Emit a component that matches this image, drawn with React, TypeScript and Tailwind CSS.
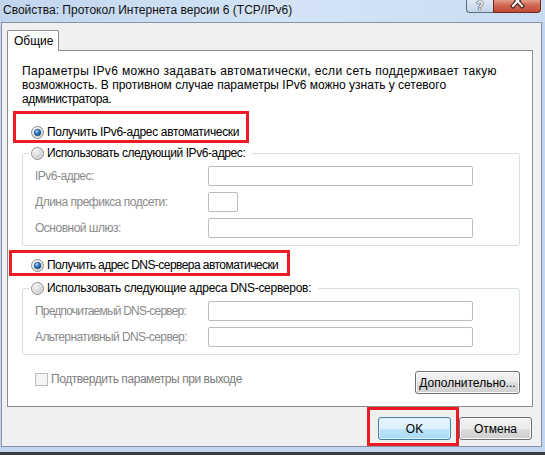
import React from 'react';

const FONT = "font-['Liberation_Sans','Noto_Sans',sans-serif]";

// Win7-style radio button
const Radio: React.FC<{ checked?: boolean }> = ({ checked = false }) => (
  <svg width="13" height="13" viewBox="0 0 13 13" className="shrink-0">
    <defs>
      <radialGradient id="rbRing" cx="35%" cy="30%" r="80%">
        <stop offset="0" stopColor="#ffffff" />
        <stop offset="1" stopColor="#d0d0d0" />
      </radialGradient>
      <radialGradient id="rbInner" cx="40%" cy="35%" r="70%">
        <stop offset="0" stopColor="#f8f8f8" />
        <stop offset="1" stopColor="#c9c9c9" />
      </radialGradient>
      <radialGradient id="rbDot" cx="35%" cy="30%" r="75%">
        <stop offset="0" stopColor="#b4dcff" />
        <stop offset="0.45" stopColor="#3a86cf" />
        <stop offset="1" stopColor="#0e3a6f" />
      </radialGradient>
    </defs>
    <circle cx="6.5" cy="6.5" r="6" fill="url(#rbRing)" stroke="#8e8f8f" />
    {checked ? (
      <circle cx="6.5" cy="6.5" r="3.3" fill="url(#rbDot)" stroke="#1d4c80" strokeWidth="0.7" />
    ) : (
      <circle cx="6.5" cy="6.5" r="3.8" fill="url(#rbInner)" />
    )}
  </svg>
);

const RadioRow: React.FC<{ label: string; checked?: boolean; track: string }> = ({
  label,
  checked,
  track,
}) => (
  <div className="flex items-center gap-[3px] h-[16px] whitespace-nowrap">
    <Radio checked={checked} />
    <span className={track}>{label}</span>
  </div>
);

const Field: React.FC<{ label: string; box: string; track?: string }> = ({
  label,
  box,
  track = 'tracking-[-0.5px]',
}) => (
  <div className="flex items-center h-[20px]">
    <span className={`w-[173px] shrink-0 text-[#8a8a8a] whitespace-nowrap ${track}`}>{label}</span>
    <div className={`h-[20px] bg-white border border-[#bcbcbc] rounded-[2px] ${box}`} />
  </div>
);

const Group: React.FC<{ title: string; track: string; children: React.ReactNode }> = ({
  title,
  track,
  children,
}) => (
  <fieldset className="w-[498px] border border-[#d5dfe5] rounded-[3px] pl-[6px] pb-[7px]">
    <legend className="pl-[2px] pr-[7px]">
      <RadioRow label={title} track={track} />
    </legend>
    <div className="pl-[6px] pt-[5px] flex flex-col gap-[6px]">{children}</div>
  </fieldset>
);

const btnBase =
  'h-[23px] flex items-center justify-center rounded-[3px] border whitespace-nowrap';
const btnNormal =
  'border-[#707070] bg-[linear-gradient(#f2f2f2_0%,#ebebeb_50%,#dddddd_50%,#cfcfcf_100%)] shadow-[inset_0_0_0_1px_#fbfbfb]';
const btnDefault =
  'border-[#3c7fb1] bg-[linear-gradient(#eaf6fd_0%,#d9f0fc_50%,#bee6fd_50%,#a7d9f5_100%)] shadow-[inset_0_0_0_1px_#dff2fc]';

const TitleBar: React.FC = () => (
  <div className="h-[22px] shrink-0 flex items-start justify-between pl-[3px] pr-[4px] bg-[linear-gradient(90deg,#c0d6ef,#d4e4f6_55%,#c9dcf2)]">
    <span className="leading-[20px] text-[#111] whitespace-nowrap">
      Свойства: Протокол Интернета версии 6 (TCP/IPv6)
    </span>
    <div className="flex h-[14px] -mt-px">
      <div className="w-[27px] h-full flex justify-center rounded-bl-[4px] border border-t-0 border-r-0 border-[#5b6b82] bg-[linear-gradient(#e2ebf6,#c3d4e9)]">
        <span className="mt-px text-[12px] leading-[13px] font-bold text-white [text-shadow:0_0_1px_#2b3440,0_0_1px_#2b3440,0_0_1px_#2b3440]">
          ?
        </span>
      </div>
      <div className="relative w-[48px] h-full overflow-hidden rounded-br-[4px] border border-t-0 border-[#6b2a22] bg-[linear-gradient(#e8a898,#d26a55_45%,#c04a35)]">
        <svg width="48" height="13" viewBox="0 0 48 13" className="absolute left-0 top-0">
          <g strokeLinecap="square">
            <path d="M19 -3 L28 7 M28 -3 L19 7" stroke="#3b1a16" strokeWidth="4.2" />
            <path d="M19 -3 L28 7 M28 -3 L19 7" stroke="#ffffff" strokeWidth="2.2" />
          </g>
        </svg>
      </div>
    </div>
  </div>
);

export default function App() {
  return (
    <div className={`w-[545px] h-[455px] flex flex-col overflow-hidden bg-[#c2d7ef] text-[12px] text-black ${FONT}`}>
      <TitleBar />

      <div className="ml-px w-[541px] h-[425px] shrink-0 flex flex-col border border-[#8593a5] bg-[#f0f0f0]">
        {/* tab strip */}
        <div className="pl-[5px] pt-[7px] flex">
          <div className="relative z-10 -mb-px w-[52px] h-[21px] flex items-center pl-[6px] bg-white border border-b-0 border-[#898c95] rounded-t-[2px]">
            Общие
          </div>
        </div>

        {/* tab page */}
        <div className="ml-[5px] w-[526px] h-[357px] shrink-0 flex flex-col border border-[#898c95] bg-white pl-[14px] pr-[11px] pt-[13px]">
          <div className="leading-[14px] whitespace-nowrap">
            <p className="tracking-[0.35px]">
              Параметры IPv6 можно задавать автоматически, если сеть поддерживает такую
            </p>
            <p>возможность. В противном случае параметры IPv6 можно узнать у сетевого</p>
            <p className="tracking-[-0.4px]">администратора.</p>
          </div>

          <div className="relative mt-[18px] pl-[9px]">
            <RadioRow label="Получить IPv6-адрес автоматически" checked track="tracking-[-0.33px]" />
            <div className="absolute left-[-9px] top-[-13px] w-[236px] h-[32px] border-[3px] border-[#ed1c24]" />
          </div>

          <div className="mt-[5px]">
            <Group title="Использовать следующий IPv6-адрес:" track="tracking-[-0.43px]">
              <Field label="IPv6-адрес:" box="w-[265px]" />
              <Field label="Длина префикса подсети:" box="w-[30px]" />
              <Field label="Основной шлюз:" box="w-[265px]" />
            </Group>
          </div>

          <div className="relative mt-[11px] pl-[9px]">
            <RadioRow
              label="Получить адрес DNS-сервера автоматически"
              checked
              track="tracking-[-0.55px]"
            />
            <div className="absolute left-[-13px] top-[-7px] w-[281px] h-[26px] border-[3px] border-[#ed1c24]" />
          </div>

          <div className="mt-[7px]">
            <Group title="Использовать следующие адреса DNS-серверов:" track="tracking-[-0.28px]">
              <Field label="Предпочитаемый DNS-сервер:" box="w-[265px]" track="tracking-[-0.8px]" />
              <Field label="Альтернативный DNS-сервер:" box="w-[265px]" track="tracking-[-0.6px]" />
            </Group>
          </div>

          <div className="mt-[15px] flex items-start justify-between">
            <div className="ml-[13px] mt-[1px] h-[16px] flex items-center gap-[3px] text-[#7d7d7d]">
              <span className="w-[13px] h-[13px] border border-[#bdbdbd] bg-[#f4f4f4]" />
              <span className="tracking-[-0.44px]">Подтвердить параметры при выходе</span>
            </div>
            <button className={`${btnBase} ${btnNormal} mt-px mr-px w-[105px] h-[22px]`}>
              Дополнительно...
            </button>
          </div>
        </div>

        {/* dialog buttons */}
        <div className="mt-[10px] pr-[9px] flex justify-end gap-[8px]">
          <div className="relative">
            <button className={`${btnBase} ${btnDefault} w-[73px]`}>OK</button>
            <div className="absolute left-[-11px] top-[-10px] w-[92px] h-[39px] border-[3px] border-[#ed1c24]" />
          </div>
          <button className={`${btnBase} ${btnNormal} w-[73px]`}>Отмена</button>
        </div>
      </div>

      <div className="h-[5px] shrink-0" />
      <div className="h-[3px] shrink-0 bg-[#3a3d42]" />
    </div>
  );
}
